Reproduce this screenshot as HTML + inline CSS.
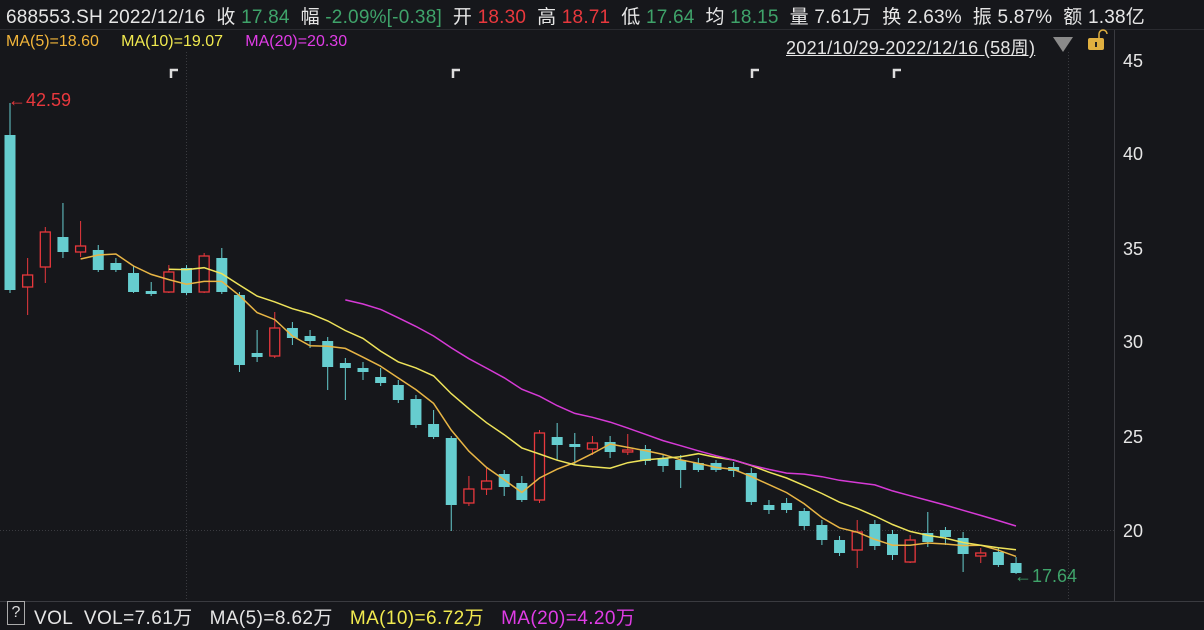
<!DOCTYPE html>
<html><head><meta charset="utf-8"><style>
body{margin:0;background:#16171b;width:1204px;height:627px;overflow:hidden;font-family:"Liberation Sans","Noto Sans CJK SC",sans-serif;position:relative;color:#ddd}
.t{position:absolute;white-space:nowrap}
.g{color:#3fa36a}.r{color:#e8383d}
</style></head><body>
<div class="t" style="left:6px;top:2px;font-size:19px;letter-spacing:0.2px;color:#e6e6e6">688553.SH 2022/12/16 &nbsp;收 <span class="g">17.84</span> &nbsp;幅 <span class="g">-2.09%[-0.38]</span> &nbsp;开 <span class="r">18.30</span> &nbsp;高 <span class="r">18.71</span> &nbsp;低 <span class="g">17.64</span> &nbsp;均 <span class="g">18.15</span> &nbsp;量 7.61万 &nbsp;换 2.63% &nbsp;振 5.87% &nbsp;额 1.38亿</div>
<div style="position:absolute;left:0;top:29px;width:1204px;height:1px;background:#2a2b30"></div>
<div class="t" style="left:6px;top:33px;font-size:16px"><span style="color:#f2b53a">MA(5)=18.60</span> &nbsp;&nbsp;&nbsp;&nbsp;<span style="color:#f1ea4f">MA(10)=19.07</span> &nbsp;&nbsp;&nbsp;&nbsp;<span style="color:#e03ce6">MA(20)=20.30</span></div>
<div class="t" style="left:786px;top:34px;font-size:18px;color:#e6e6e6;text-decoration:underline;letter-spacing:0.3px">2021/10/29-2022/12/16 (58周)</div>
<svg width="1204" height="627" style="position:absolute;left:0;top:0" id="s">
<polygon points="1053,37 1073,37 1063,52" fill="#8a8a8a"/>
<rect x="1088" y="38" width="16" height="12" rx="2" fill="#e0b040"/>
<path d="M1099,38 v-4 a4,4 0 0 1 8,0" stroke="#e0b040" stroke-width="1.5" fill="none"/>
<rect x="1095" y="42" width="2" height="5" fill="#222"/>
<line x1="1114.5" y1="30" x2="1114.5" y2="601" stroke="#3a3b40"/>
<line x1="186.5" y1="52" x2="186.5" y2="601" stroke="#3a3b40" stroke-dasharray="1,2"/>
<line x1="1068.5" y1="52" x2="1068.5" y2="601" stroke="#3a3b40" stroke-dasharray="1,2"/>
<line x1="0" y1="530.5" x2="1114" y2="530.5" stroke="#3a3b40" stroke-dasharray="1,2"/>
<line x1="0" y1="601.5" x2="1204" y2="601.5" stroke="#3a3b40"/>
<g fill="#e6e6e6" font-size="18" font-family="Liberation Sans,sans-serif">
<text x="1123" y="67">45</text><text x="1123" y="160">40</text><text x="1123" y="255">35</text><text x="1123" y="348">30</text><text x="1123" y="443">25</text><text x="1123" y="537">20</text></g>
<g stroke="#ddd" stroke-width="2.5" fill="none">
<path d="M171,78 v-8 h7"/><path d="M453,78 v-8 h7"/><path d="M752,78 v-8 h7"/><path d="M894,78 v-8 h7"/></g>
<text x="8" y="106" fill="#e8383d" font-size="18" font-family="Liberation Sans,sans-serif">←42.59</text>
<text x="1014" y="582" fill="#3fa36a" font-size="18" font-family="Liberation Sans,sans-serif">←17.64</text>
<g id="c"></g>
</svg>
<div style="position:absolute;left:7px;top:601px;width:16px;height:22px;border:1px solid #aaa;color:#ddd;font-size:16px;text-align:center;line-height:22px">?</div>
<div class="t" style="left:34px;top:603px;font-size:19px;letter-spacing:0.4px;color:#e6e6e6">VOL &nbsp;VOL=7.61万 &nbsp;&nbsp;MA(5)=8.62万 &nbsp;&nbsp;<span style="color:#f1ea4f">MA(10)=6.72万</span> &nbsp;&nbsp;<span style="color:#e03ce6">MA(20)=4.20万</span></div>
<script>
var d=[[0,135,290,103,293],[1,275,287,258,315],[1,232,267,227,283],[0,237,252,203,258],[1,246,252,221,257],[0,250,270,245,272],[0,263,270,258,272],[0,273,292,266,293],[0,291,294,282,296],[1,272,292,265,293],[0,268,293,265,295],[1,256,292,253,293],[0,258,292,248,294],[0,295,365,292,372],[0,353,357,330,362],[1,328,356,312,358],[0,328,338,322,345],[0,336,341,330,348],[0,341,367,337,390],[0,363,368,358,400],[0,368,372,362,380],[0,377,383,368,386],[0,385,400,380,403],[0,399,425,395,428],[0,424,437,410,439],[0,438,505,436,531],[1,489,503,476,506],[1,481,489,468,495],[0,474,487,470,496],[0,483,500,476,502],[1,433,500,430,503],[0,437,445,423,460],[0,444,447,433,465],[1,443,449,436,455],[0,442,452,436,458],[1,450,452,434,455],[0,449,461,445,465],[0,458,466,454,472],[0,460,470,455,488],[0,463,470,458,472],[0,463,470,460,472],[0,467,471,462,477],[0,473,502,468,505],[0,505,510,500,514],[0,503,510,498,513],[0,511,526,508,530],[0,525,540,520,545],[0,540,553,536,556],[1,532,550,520,568],[0,524,546,520,550],[0,534,555,530,560],[1,540,562,535,563],[0,533,542,512,547],[0,530,537,527,545],[0,538,554,532,572],[1,553,556,548,563],[0,552,565,548,567],[0,563,573,557,574]];
var s='',cl=[];
d.forEach(function(c,i){var x=10+17.65*i,col=c[0]?'#e8383d':'#66cdcf';cl.push(c[0]?c[1]:c[2]);
s+='<line x1="'+x+'" y1="'+c[3]+'" x2="'+x+'" y2="'+c[4]+'" stroke="'+col+'" stroke-width="1"/>';
var h=Math.max(c[2]-c[1],1.5);
if(c[0])s+='<rect x="'+(x-5)+'" y="'+c[1]+'" width="10" height="'+h+'" fill="#16171b" stroke="'+col+'" stroke-width="1.3"/>';
else s+='<rect x="'+(x-5.5)+'" y="'+c[1]+'" width="11" height="'+h+'" fill="'+col+'"/>';});
function ma(n,col){var p=[];for(var i=n-1;i<cl.length;i++){var t=0;for(var j=0;j<n;j++)t+=cl[i-j];p.push((10+17.65*i).toFixed(1)+','+(t/n).toFixed(1));}
return '<polyline points="'+p.join(' ')+'" fill="none" stroke="'+col+'" stroke-width="1.5"/>';}
s+=ma(5,'#e8b545')+ma(10,'#eee35a')+ma(20,'#d63ad6');
document.getElementById('c').innerHTML=s;
</script>
</body></html>
